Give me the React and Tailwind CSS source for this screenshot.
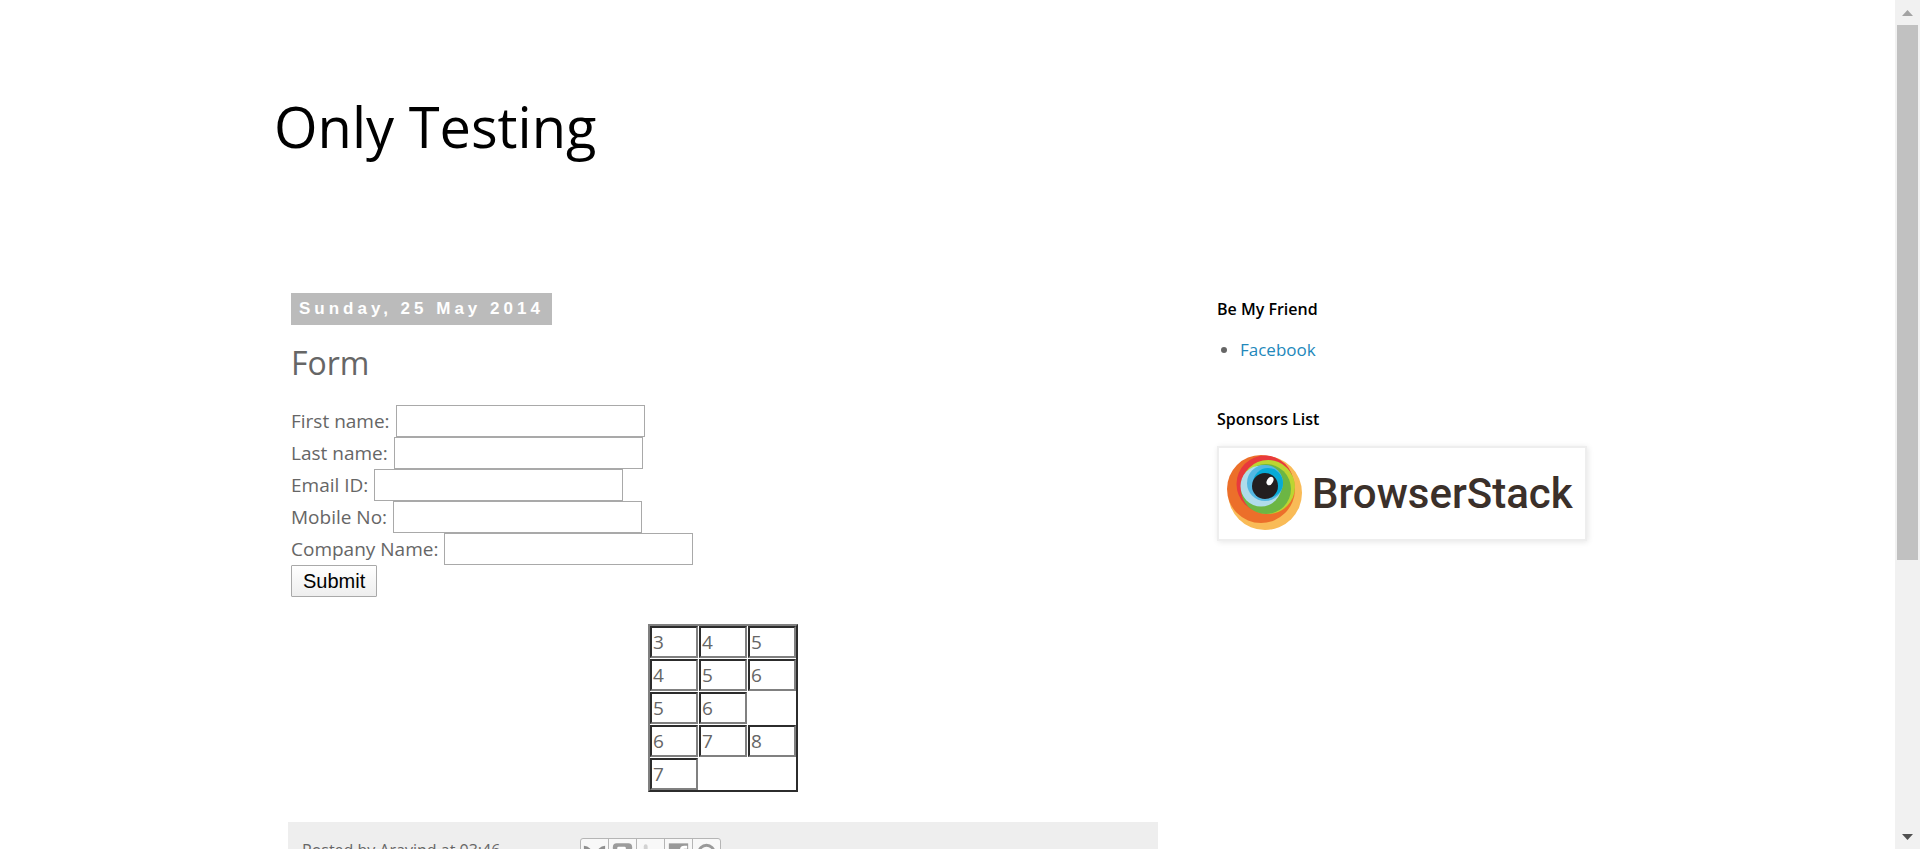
const FIELDS = [
  { id: 'fname', label: 'First name:' },
  { id: 'lname', label: 'Last name:' },
  { id: 'email', label: 'Email ID:' },
  { id: 'mobile', label: 'Mobile No:' },
  { id: 'company', label: 'Company Name:' },
];

const ROWS = [
  [3, 4, 5],
  [4, 5, 6],
  [5, 6],
  [6, 7, 8],
  [7],
];

const SHARES = [
  {
    name: 'Email this',
    art: (
      <path d="M3 6.500 Q7 7 9 9 L14 14 L19 9 Q21 7 25 6.500 V21 H3 Z" fill="#8f8f8f" />
    ),
  },
  {
    name: 'BlogThis!',
    art: (
      <>
        <rect x="4" y="4" width="20" height="19" rx="4" fill="#9c9c9c" />
        <path d="M10 9h6M10 17h8" stroke="#fff" strokeWidth="3" strokeLinecap="round" />
      </>
    ),
  },
  {
    name: 'Share to Twitter',
    art: (
      <path d="M9 7v12q0 3 4 3h6M9 12h9" fill="none" stroke="#d2d2d2" strokeWidth="4" strokeLinecap="round" />
    ),
  },
  {
    name: 'Share to Facebook',
    art: (
      <>
        <rect x="4" y="4" width="20" height="19" fill="#999" />
        <path d="M23 8h-3q-3 0-3 3v12M13 14h9" fill="none" stroke="#fff" strokeWidth="3" />
      </>
    ),
  },
  {
    name: 'Share to Pinterest',
    art: (
      <>
        <circle cx="14" cy="14" r="8" fill="none" stroke="#999" strokeWidth="3" />
        <path d="M13 21l3-9" stroke="#999" strokeWidth="2" />
      </>
    ),
  },
];

function BrowserStackLogo() {
  return (
    <svg viewBox="0 0 366 91" className="block w-full" role="img" aria-label="BrowserStack">
      <circle cx="46" cy="45" r="37" fill="#f9bb57" />
      <circle cx="42" cy="41" r="34" fill="#ec6f2a" />
      <circle cx="46" cy="36" r="28.500" fill="#e83a3c" />
      <circle cx="49" cy="39" r="27" fill="#bcd531" />
      <circle cx="47" cy="41" r="25" fill="#6cb644" />
      <circle cx="42" cy="38" r="20.500" fill="#b0dcea" />
      <circle cx="46" cy="35" r="18" fill="#53b8e2" />
      <circle cx="49" cy="35" r="15" fill="#07abd6" />
      <circle cx="46" cy="38" r="13" fill="#231f20" />
      <ellipse cx="51" cy="33" rx="3" ry="4.500" transform="rotate(30 51 33)" fill="#fff" />
      <text x="93" y="60" fontFamily="Roboto, sans-serif" fontWeight="500" fontSize="42" fill="#3b302a">
        BrowserStack
      </text>
    </svg>
  );
}

function ScrollBar() {
  return (
    <div aria-hidden="true" className="flex w-[25px] shrink-0 flex-col items-center bg-[#f1f1f1]">
      <div className="flex h-[25px] shrink-0 items-center">
        <svg width="11" height="6" viewBox="0 0 11 6"><path d="M5.500 0 L11 6 L0 6 Z" fill="#a3a3a3" /></svg>
      </div>
      <div className="w-[21px] grow-[535] bg-[#c1c1c1]" />
      <div className="grow-[264]" />
      <div className="flex h-[25px] shrink-0 items-center">
        <svg width="11" height="6" viewBox="0 0 11 6"><path d="M0 0 L11 0 L5.500 6 Z" fill="#505050" /></svg>
      </div>
    </div>
  );
}

export default function App() {
  return (
    <div className="flex h-screen overflow-hidden bg-white font-['Open_Sans',sans-serif] text-[#666666]">
      <div className="flex-1 overflow-hidden">
        <div className="mx-auto max-w-[1347px]">
          <header className="pt-[86px] pb-[127px]">
            <h1 className="text-[56px] leading-[80px] font-medium text-black">Only Testing</h1>
          </header>
          <div className="flex gap-[59px]">
            <main className="w-[884px]">
              <div className="pr-[3px] pl-[17px]">
                <h2 className="inline-block bg-[#bbbbbb] px-2 font-['Liberation_Sans',sans-serif] text-[17px] leading-8 font-bold tracking-[4px] text-white">
                  Sunday, 25 May 2014
                </h2>
                <h3 className="mt-4 text-[32px] leading-[44px]">Form</h3>
                <form className="mt-[20px] text-[19px] leading-8 font-medium" onSubmit={(e) => e.preventDefault()}>
                  {FIELDS.map((f) => (
                    <div key={f.id} className="flex gap-[6px]">
                      <label htmlFor={f.id}>{f.label}</label>
                      <input id={f.id} type="text" className="h-8 w-[249px] border border-[#a9a9a9] bg-white px-1" />
                    </div>
                  ))}
                  <button
                    type="submit"
                    className="block h-8 rounded-[1px] border border-[#a9a9a9] bg-linear-to-b from-white to-[#eeeeee] px-[11px] font-['Liberation_Sans',sans-serif] text-[20px] leading-[30px] font-normal text-black"
                  >
                    Submit
                  </button>
                </form>
                <div className="mx-auto mt-[27px] w-fit border-2 border-t-[#808080] border-r-[#2c2c2c] border-b-[#2c2c2c] border-l-[#808080]">
                  <table className="-m-px border-separate border-spacing-px text-[19px] leading-7 font-medium">
                    <tbody>
                      {ROWS.map((row, r) => (
                        <tr key={r}>
                          {row.map((n) => (
                            <td
                              key={n}
                              className="h-8 w-12 border-2 border-t-[#2c2c2c] border-r-[#808080] border-b-[#808080] border-l-[#2c2c2c] p-0 px-px"
                            >
                              {n}
                            </td>
                          ))}
                        </tr>
                      ))}
                    </tbody>
                  </table>
                </div>
              </div>
              <footer className="mt-[30px] ml-[14px] flex items-start gap-20 bg-[#eeeeee] px-[14px] pt-4 pb-6 text-[16px]">
                <p className="leading-6">Posted by Aravind at 03:46</p>
                <div className="flex divide-x divide-[#b5b5b5] rounded-[3px] border border-[#b5b5b5] bg-[#f8f8f8]">
                  {SHARES.map((s) => (
                    <a key={s.name} href="#share" aria-label={s.name} className="block">
                      <svg width="27" height="28" viewBox="0 0 28 28">{s.art}</svg>
                    </a>
                  ))}
                </div>
              </footer>
            </main>
            <aside className="w-[370px]">
              <h2 className="text-[16px] leading-8 font-semibold text-black">Be My Friend</h2>
              <ul className="mt-[9px] list-disc pl-[23px] text-[17px] leading-8">
                <li><a href="#facebook" className="text-[#2288bb]">Facebook</a></li>
              </ul>
              <h2 className="mt-[37px] text-[16px] leading-8 font-semibold text-black">Sponsors List</h2>
              <a href="#browserstack" className="mt-[11px] block border-2 border-[#eeeeee] shadow-[1px_1px_6px_rgba(0,0,0,0.1)]">
                <BrowserStackLogo />
              </a>
            </aside>
          </div>
        </div>
      </div>
      <ScrollBar />
    </div>
  );
}
